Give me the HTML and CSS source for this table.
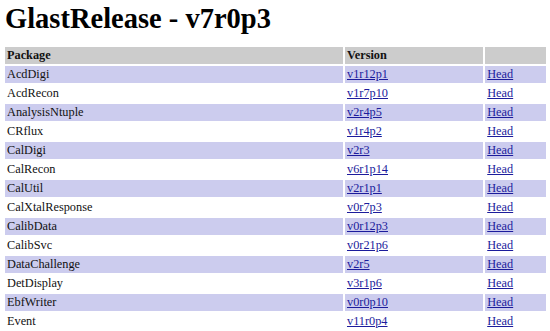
FILE: index.html
```html
<!DOCTYPE html>
<html>
<head>
<meta charset="utf-8">
<title>GlastRelease - v7r0p3</title>
<link rel="stylesheet" href="styles.css">
</head>
<body>
<h1 class="title">GlastRelease - v7r0p3</h1>
<table class="pkgs">
  <thead>
    <tr><th class="c-pkg">Package</th><th class="c-ver">Version</th><th class="c-head"></th></tr>
  </thead>
  <tbody>
    <tr class="odd"><td>AcdDigi</td><td><a href="#">v1r12p1</a></td><td><a href="#">Head</a></td></tr>
    <tr><td>AcdRecon</td><td><a href="#">v1r7p10</a></td><td><a href="#">Head</a></td></tr>
    <tr class="odd"><td>AnalysisNtuple</td><td><a href="#">v2r4p5</a></td><td><a href="#">Head</a></td></tr>
    <tr><td>CRflux</td><td><a href="#">v1r4p2</a></td><td><a href="#">Head</a></td></tr>
    <tr class="odd"><td>CalDigi</td><td><a href="#">v2r3</a></td><td><a href="#">Head</a></td></tr>
    <tr><td>CalRecon</td><td><a href="#">v6r1p14</a></td><td><a href="#">Head</a></td></tr>
    <tr class="odd"><td>CalUtil</td><td><a href="#">v2r1p1</a></td><td><a href="#">Head</a></td></tr>
    <tr><td>CalXtalResponse</td><td><a href="#">v0r7p3</a></td><td><a href="#">Head</a></td></tr>
    <tr class="odd"><td>CalibData</td><td><a href="#">v0r12p3</a></td><td><a href="#">Head</a></td></tr>
    <tr><td>CalibSvc</td><td><a href="#">v0r21p6</a></td><td><a href="#">Head</a></td></tr>
    <tr class="odd"><td>DataChallenge</td><td><a href="#">v2r5</a></td><td><a href="#">Head</a></td></tr>
    <tr><td>DetDisplay</td><td><a href="#">v3r1p6</a></td><td><a href="#">Head</a></td></tr>
    <tr class="odd"><td>EbfWriter</td><td><a href="#">v0r0p10</a></td><td><a href="#">Head</a></td></tr>
    <tr><td>Event</td><td><a href="#">v11r0p4</a></td><td><a href="#">Head</a></td></tr>
  </tbody>
</table>
</body>
</html>
```
FILE: styles.css
```css
html, body {
  margin: 0;
  padding: 0;
  background: #ffffff;
}
body {
  font-family: "Liberation Serif", "Times New Roman", serif;
  color: #111111;
  overflow: hidden;
}
.title {
  margin: 0;
  padding: 3px 0 0 5px;
  height: 45px;
  box-sizing: border-box;
  font-size: 28.5px;
  line-height: 32px;
  font-weight: bold;
  color: #000000;
}
.pkgs {
  margin-left: 3px;
  width: 545px;
  border-collapse: separate;
  border-spacing: 2px;
  font-size: 12.3px;
  line-height: 15px;
}
.pkgs th,
.pkgs td {
  padding: 1px 2px;
  text-align: left;
  vertical-align: middle;
  white-space: nowrap;
}
.pkgs th {
  background: #cccccc;
  font-weight: bold;
}
.c-pkg { width: 336px; }
.c-ver { width: 135px; }
.c-head { width: 57px; }
.pkgs tr.odd td {
  background: #ccccee;
}
.pkgs a {
  color: #1c1c9c;
  text-decoration: underline;
}
```
